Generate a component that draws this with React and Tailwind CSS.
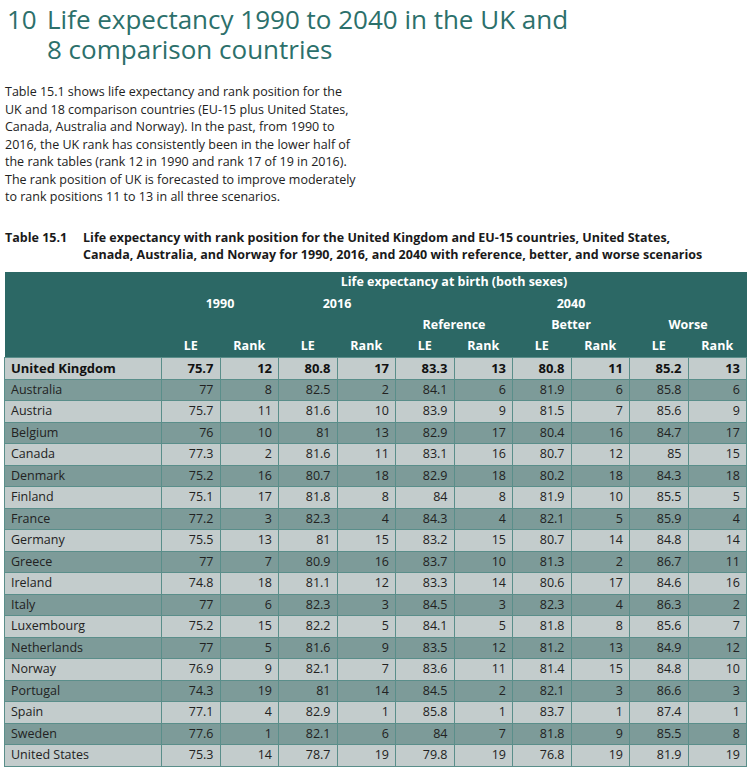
import React from 'react';

const rows = [
    ['United Kingdom', '75.7', '12', '80.8', '17', '83.3', '13', '80.8', '11', '85.2', '13'],
    ['Australia', '77', '8', '82.5', '2', '84.1', '6', '81.9', '6', '85.8', '6'],
    ['Austria', '75.7', '11', '81.6', '10', '83.9', '9', '81.5', '7', '85.6', '9'],
    ['Belgium', '76', '10', '81', '13', '82.9', '17', '80.4', '16', '84.7', '17'],
    ['Canada', '77.3', '2', '81.6', '11', '83.1', '16', '80.7', '12', '85', '15'],
    ['Denmark', '75.2', '16', '80.7', '18', '82.9', '18', '80.2', '18', '84.3', '18'],
    ['Finland', '75.1', '17', '81.8', '8', '84', '8', '81.9', '10', '85.5', '5'],
    ['France', '77.2', '3', '82.3', '4', '84.3', '4', '82.1', '5', '85.9', '4'],
    ['Germany', '75.5', '13', '81', '15', '83.2', '15', '80.7', '14', '84.8', '14'],
    ['Greece', '77', '7', '80.9', '16', '83.7', '10', '81.3', '2', '86.7', '11'],
    ['Ireland', '74.8', '18', '81.1', '12', '83.3', '14', '80.6', '17', '84.6', '16'],
    ['Italy', '77', '6', '82.3', '3', '84.5', '3', '82.3', '4', '86.3', '2'],
    ['Luxembourg', '75.2', '15', '82.2', '5', '84.1', '5', '81.8', '8', '85.6', '7'],
    ['Netherlands', '77', '5', '81.6', '9', '83.5', '12', '81.2', '13', '84.9', '12'],
    ['Norway', '76.9', '9', '82.1', '7', '83.6', '11', '81.4', '15', '84.8', '10'],
    ['Portugal', '74.3', '19', '81', '14', '84.5', '2', '82.1', '3', '86.6', '3'],
    ['Spain', '77.1', '4', '82.9', '1', '85.8', '1', '83.7', '1', '87.4', '1'],
    ['Sweden', '77.6', '1', '82.1', '6', '84', '7', '81.8', '9', '85.5', '8'],
    ['United States', '75.3', '14', '78.7', '19', '79.8', '19', '76.8', '19', '81.9', '19'],
];

const App = () => {
    return (
        <div className="w-[750px] h-[767px] overflow-hidden bg-white text-[#1a1a1a]" style={{ fontFamily: '"Open Sans", "Noto Sans", sans-serif' }}>
            {/* Heading */}
            <h1 className="flex pl-[7px] pt-[4px] text-[26px] leading-[30px] text-[#2c706b]">
                <span className="w-[40px] shrink-0">10</span>
                <span>Life expectancy 1990 to 2040 in the UK and<br />8 comparison countries</span>
            </h1>

            {/* Intro */}
            <p className="pl-[5px] mt-[19px] text-[12.5px] leading-[17.5px] text-[#222]">
                Table 15.1 shows life expectancy and rank position for the<br />
                UK and 18 comparison countries (EU-15 plus United States,<br />
                Canada, Australia and Norway). In the past, from 1990 to<br />
                2016, the UK rank has consistently been in the lower half of<br />
                the rank tables (rank 12 in 1990 and rank 17 of 19 in 2016).<br />
                The rank position of UK is forecasted to improve moderately<br />
                to rank positions 11 to 13 in all three scenarios.
            </p>

            {/* Caption */}
            <div className="flex pl-[5px] mt-[23px] text-[12.5px] leading-[17px] font-bold text-[#1a1a1a]">
                <span className="w-[78px] shrink-0">Table 15.1</span>
                <span>
                    Life expectancy with rank position for the United Kingdom and EU-15 countries, United States,<br />
                    Canada, Australia, and Norway for 1990, 2016, and 2040 with reference, better, and worse scenarios
                </span>
            </div>

            {/* Table */}
            <table className="ml-[4px] mt-[9px] w-[743px] table-fixed border-collapse text-[12.5px]">
                <colgroup>
                    <col className="w-[157px]" />
                    {Array.from({ length: 10 }).map((_, i) => (
                        <col key={i} />
                    ))}
                </colgroup>
                <thead className="bg-[#2c6865] text-white font-bold">
                    <tr className="h-[21.5px]">
                        <th></th>
                        <th colSpan={10} className="text-center leading-none">Life expectancy at birth (both sexes)</th>
                    </tr>
                    <tr className="h-[21.5px]">
                        <th></th>
                        <th colSpan={2} className="text-center leading-none">1990</th>
                        <th colSpan={2} className="text-center leading-none">2016</th>
                        <th colSpan={6} className="text-center leading-none">2040</th>
                    </tr>
                    <tr className="h-[21.5px]">
                        <th></th>
                        <th colSpan={4}></th>
                        <th colSpan={2} className="text-center leading-none">Reference</th>
                        <th colSpan={2} className="text-center leading-none">Better</th>
                        <th colSpan={2} className="text-center leading-none">Worse</th>
                    </tr>
                    <tr className="h-[21.5px]">
                        <th></th>
                        {['LE', 'Rank', 'LE', 'Rank', 'LE', 'Rank', 'LE', 'Rank', 'LE', 'Rank'].map((h, i) => (
                            <th key={i} className="text-center leading-none">{h}</th>
                        ))}
                    </tr>
                </thead>
                <tbody>
                    {rows.map((row, r) => {
                        const dark = r % 2 === 1;
                        const bold = r === 0;
                        return (
                            <tr key={row[0]} className={`h-[21.5px] ${dark ? 'bg-[#7d9b99]' : 'bg-[#c3cccc]'} ${bold ? 'font-bold text-[#111] text-[13px]' : 'text-[#222]'}`}>
                                {row.map((cell, c) => (
                                    <td
                                        key={c}
                                        className={`border border-[#5a8e8a] leading-none p-0 ${c === 0 ? 'text-left pl-[6px]' : 'text-right pr-[6px]'}`}
                                    >
                                        {cell}
                                    </td>
                                ))}
                            </tr>
                        );
                    })}
                </tbody>
            </table>
        </div>
    );
};

export default App;
